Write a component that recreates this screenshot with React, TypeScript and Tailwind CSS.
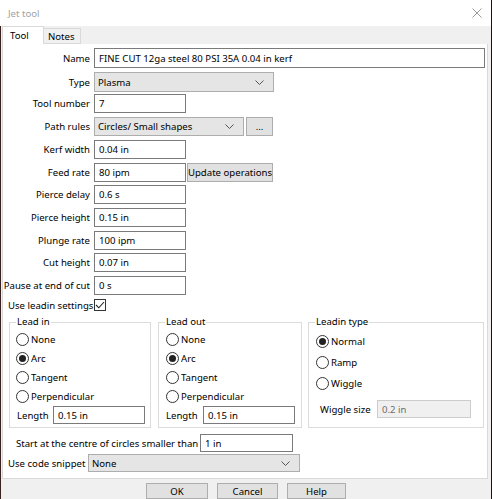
import React from "react";

const Chevron = () => (
  <svg width="9" height="5" viewBox="0 0 9 5" className="shrink-0">
    <path d="M0.5 0.5 L4.5 4.5 L8.5 0.5" fill="none" stroke="#555" strokeWidth="1" />
  </svg>
);

const Input = ({ w, value, disabled }: { w: string; value: string; disabled?: boolean }) => (
  <div
    className={`${w} shrink-0 h-full flex items-center pl-[4px] border ${
      disabled ? "border-[#cccccc] bg-[#f0f0f0] text-[#6d6d6d]" : "border-[#7a7a7a] bg-white text-black"
    } whitespace-nowrap overflow-hidden`}
  >
    {value}
  </div>
);

const Select = ({ w, value }: { w: string; value: string }) => (
  <div className={`${w} shrink-0 h-full flex items-center justify-between pl-[3px] pr-[9px] border border-[#adadad] bg-[#e5e5e5] text-black whitespace-nowrap`}>
    <span>{value}</span>
    <Chevron />
  </div>
);

const Button = ({ w, label, cls = "" }: { w: string; label: string; cls?: string }) => (
  <div className={`${w} shrink-0 h-full flex items-center justify-center border border-[#adadad] bg-[#e1e1e1] text-black whitespace-nowrap ${cls}`}>
    {label}
  </div>
);

const Row = ({ label, mt, h, children }: { label: string; mt: string; h: string; children: React.ReactNode }) => (
  <div className={`flex items-center ${mt} ${h}`}>
    <div className="w-[87px] shrink-0 text-right whitespace-nowrap">{label}</div>
    <div className="ml-[4px] flex h-full items-center gap-[2px]">{children}</div>
  </div>
);

const Radio = ({ checked, label }: { checked?: boolean; label: string }) => (
  <div className="flex items-center h-[16px] gap-[2px] whitespace-nowrap">
    <div className="w-[13px] h-[13px] shrink-0 rounded-full border border-[#333] flex items-center justify-center bg-white">
      {checked && <div className="w-[7px] h-[7px] rounded-full bg-[#222]" />}
    </div>
    <span>{label}</span>
  </div>
);

const Group = ({ title, cls, children }: { title: string; cls: string; children: React.ReactNode }) => (
  <div className={`relative border border-[#dcdcdc] h-[106px] shrink-0 ${cls}`}>
    <span className="absolute -top-[8px] left-[6px] bg-white px-[1px] leading-[14px] whitespace-nowrap">{title}</span>
    {children}
  </div>
);

export default function App() {
  return (
    <div className="w-[492px] h-[499px] overflow-hidden bg-white border-r border-[#1a1111] flex flex-col font-['Noto_Sans',sans-serif] text-[9.6px] leading-[13px] text-black">
      {/* Title bar */}
      <div className="h-[26px] shrink-0 flex items-center justify-between pl-[8px] pr-[9px] bg-white">
        <span className="text-[#a3a3a3]">Jet tool</span>
        <svg width="10" height="10" viewBox="0 0 10 10">
          <path d="M0.5 0.5 L9.5 9.5 M9.5 0.5 L0.5 9.5" stroke="#9a9a9a" strokeWidth="1" />
        </svg>
      </div>
      <div className="flex-1 flex flex-col border-l border-[#3a2222] bg-[#f0f0f0]">
        {/* Tabs */}
        <div className="h-[18px] shrink-0 flex items-end pl-[1px]">
          <div className="w-[42px] h-[18px] bg-white border border-b-0 border-[#d9d9d9] pl-[7px] flex items-center">Tool</div>
          <div className="w-[37px] h-[16px] bg-[#f0f0f0] border border-l-0 border-[#d9d9d9] pl-[4px] flex items-center">Notes</div>
        </div>
        {/* Content */}
        <div className="h-[435px] shrink-0 ml-[1px] mr-[3px] bg-white border border-t-0 border-[#d9d9d9] flex flex-col">
          <Row label="Name" mt="mt-[4px]" h="h-[20px]">
            <Input w="w-[391px]" value="FINE CUT 12ga steel 80 PSI 35A 0.04 in kerf" />
          </Row>
          <Row label="Type" mt="mt-[4px]" h="h-[20px]">
            <Select w="w-[180px]" value="Plasma" />
          </Row>
          <Row label="Tool number" mt="mt-[2px]" h="h-[19px]">
            <Input w="w-[92px]" value="7" />
          </Row>
          <Row label="Path rules" mt="mt-[4px]" h="h-[19px]">
            <Select w="w-[150px]" value="Circles/ Small shapes" />
            <Button w="w-[27px]" label="..." />
          </Row>
          <Row label="Kerf width" mt="mt-[4px]" h="h-[19px]">
            <Input w="w-[92px]" value="0.04 in" />
          </Row>
          <Row label="Feed rate" mt="mt-[4px]" h="h-[19px]">
            <Input w="w-[92px]" value="80 ipm" />
            <Button w="w-[86px]" label="Update operations" cls="-ml-[1px]" />
          </Row>
          <Row label="Pierce delay" mt="mt-[3px]" h="h-[19px]">
            <Input w="w-[92px]" value="0.6 s" />
          </Row>
          <Row label="Pierce height" mt="mt-[4px]" h="h-[19px]">
            <Input w="w-[92px]" value="0.15 in" />
          </Row>
          <Row label="Plunge rate" mt="mt-[4px]" h="h-[19px]">
            <Input w="w-[92px]" value="100 ipm" />
          </Row>
          <Row label="Cut height" mt="mt-[3px]" h="h-[19px]">
            <Input w="w-[92px]" value="0.07 in" />
          </Row>
          <Row label="Pause at end of cut" mt="mt-[4px]" h="h-[19px]">
            <Input w="w-[92px]" value="0 s" />
          </Row>
          <div className="flex items-center mt-[3px] h-[14px] pl-[5px] gap-[1px] whitespace-nowrap">
            <span>Use leadin settings</span>
            <div className="w-[12px] h-[12px] shrink-0 border border-[#333] flex items-center justify-center">
              <svg width="10" height="8" viewBox="0 0 10 8">
                <path d="M1 4 L3.8 6.8 L9 1" fill="none" stroke="#222" strokeWidth="1.1" />
              </svg>
            </div>
          </div>
          {/* Groups */}
          <div className="flex mt-[10px] pl-[6px]">
            <Group title="Lead in" cls="w-[142px]">
              <div className="flex flex-col pl-[6px] pt-[8px] gap-[3px]">
                <Radio label="None" />
                <Radio checked label="Arc" />
                <Radio label="Tangent" />
                <Radio label="Perpendicular" />
              </div>
              <div className="flex items-center h-[18px] mt-[2px] pl-[7px]">
                <span className="w-[36px] shrink-0">Length</span>
                <Input w="w-[92px]" value="0.15 in" />
              </div>
            </Group>
            <Group title="Lead out" cls="w-[144px] ml-[7px]">
              <div className="flex flex-col pl-[7px] pt-[8px] gap-[3px]">
                <Radio label="None" />
                <Radio checked label="Arc" />
                <Radio label="Tangent" />
                <Radio label="Perpendicular" />
              </div>
              <div className="flex items-center h-[18px] mt-[2px] pl-[7px]">
                <span className="w-[37px] shrink-0">Length</span>
                <Input w="w-[92px]" value="0.15 in" />
              </div>
            </Group>
            <Group title="Leadin type" cls="w-[176px] ml-[6px]">
              <div className="flex flex-col pl-[7px] pt-[10px] gap-[5px]">
                <Radio checked label="Normal" />
                <Radio label="Ramp" />
                <Radio label="Wiggle" />
              </div>
              <div className="flex items-center h-[18px] mt-[9px] pl-[11px]">
                <span className="w-[57px] shrink-0 whitespace-nowrap">Wiggle size</span>
                <Input w="w-[94px]" value="0.2 in" disabled />
              </div>
            </Group>
          </div>
          <div className="flex items-center mt-[6px] h-[18px] pl-[13px]">
            <span className="w-[184px] shrink-0 whitespace-nowrap">Start at the centre of circles smaller than</span>
            <Input w="w-[93px]" value="1 in" />
          </div>
          <div className="flex items-center mt-[2px] h-[18px] pl-[5px]">
            <span className="w-[80px] shrink-0 whitespace-nowrap">Use code snippet</span>
            <Select w="w-[212px]" value="None" />
          </div>
        </div>
        {/* Bottom */}
        <div className="flex-1 flex pt-[4px] pl-[145px] gap-[8px] overflow-hidden">
          <Button w="w-[62px]" label="OK" cls="h-[20px]" />
          <Button w="w-[61px]" label="Cancel" cls="h-[20px] ml-[1px]" />
          <Button w="w-[59px]" label="Help" cls="h-[20px] ml-[1px]" />
        </div>
      </div>
    </div>
  );
}
